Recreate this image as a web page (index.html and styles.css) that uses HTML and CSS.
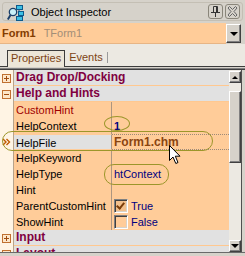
FILE: index.html
```html
<!DOCTYPE html>
<html>
<head>
    <title>Object Inspector</title>
    <link rel="stylesheet" href="styles.css">
</head>
<body>
    <div class="inspector">
        <div class="titlebar">
            <div class="caption">
                <svg class="app-icon" width="17" height="17" viewBox="0 0 17 17">
                    <path d="M12 3 V14 M12 9 H14" stroke="#1b4f80" stroke-width="1" fill="none"/>
                    <rect x="9.5" y="1.5" width="6" height="4" fill="#3cc0e4" stroke="#0d5b8c"/>
                    <rect x="11.5" y="7.5" width="5" height="4" fill="#3cc0e4" stroke="#0d5b8c"/>
                    <rect x="9.5" y="12.5" width="6" height="4" fill="#3cc0e4" stroke="#0d5b8c"/>
                    <line x1="3.5" y1="11" x2="0.8" y2="15.5" stroke="#1b3f6a" stroke-width="2"/>
                    <circle cx="6" cy="8" r="3.7" fill="#c8f0f8" stroke="#1b3f6a" stroke-width="1.3"/>
                </svg>
                <span class="title">Object Inspector</span>
                <span class="tool-btn">
                    <svg width="13" height="13" viewBox="0 0 13 13">
                        <path d="M4.5 1.5 H8.5 V7.5 H4.5 Z" fill="none" stroke="#333"/>
                        <path d="M7.5 2 V7" stroke="#333"/>
                        <path d="M2 7.5 H11 M6.5 8 V12" stroke="#333"/>
                    </svg>
                </span>
                <span class="tool-btn">
                    <svg width="13" height="13" viewBox="0 0 13 13">
                        <polygon points="2,3 3.5,1.5 6.5,4.5 9.5,1.5 11,3 8,6.5 11,10 9.5,11.5 6.5,8.5 3.5,11.5 2,10 5,6.5" fill="none" stroke="#666"/>
                    </svg>
                </span>
            </div>
        </div>

        <div class="combo">
            <div class="combo-field">
                <span class="obj-name">Form1</span>
                <span class="obj-type">TForm1</span>
            </div>
            <span class="drop-btn"><i class="tri-down"></i></span>
        </div>

        <div class="tabs">
            <span class="tab active">Properties</span>
            <span class="tab">Events</span>
            <span class="tab-sep"></span>
        </div>

        <div class="grid-wrap">
            <div class="grid">
                <div class="row cat">
                    <span class="gut"><i class="box plus"></i></span>
                    <span class="cat-name">Drag Drop/Docking</span>
                </div>
                <div class="row cat">
                    <span class="gut"><i class="box"></i></span>
                    <span class="cat-name">Help and Hints</span>
                </div>
                <div class="row">
                    <span class="gut"></span>
                    <span class="name sub">CustomHint</span>
                    <span class="val"></span>
                </div>
                <div class="row">
                    <span class="gut"></span>
                    <span class="name">HelpContext</span>
                    <span class="val num">1</span>
                </div>
                <div class="row selected">
                    <span class="gut">
                        <svg width="9" height="8" viewBox="0 0 9 8">
                            <path d="M1 1 L4 4 L1 7 M4.5 1 L7.5 4 L4.5 7" fill="none" stroke="#c05a00" stroke-width="1.4"/>
                        </svg>
                    </span>
                    <span class="name">HelpFile</span>
                    <span class="val changed">Form1.chm</span>
                </div>
                <div class="row">
                    <span class="gut"></span>
                    <span class="name">HelpKeyword</span>
                    <span class="val"></span>
                </div>
                <div class="row">
                    <span class="gut"></span>
                    <span class="name">HelpType</span>
                    <span class="val enum">htContext</span>
                </div>
                <div class="row">
                    <span class="gut"></span>
                    <span class="name">Hint</span>
                    <span class="val"></span>
                </div>
                <div class="row">
                    <span class="gut"></span>
                    <span class="name">ParentCustomHint</span>
                    <span class="val enum"><i class="check on"></i>True</span>
                </div>
                <div class="row">
                    <span class="gut"></span>
                    <span class="name">ShowHint</span>
                    <span class="val enum"><i class="check"></i>False</span>
                </div>
                <div class="row cat">
                    <span class="gut"><i class="box plus"></i></span>
                    <span class="cat-name">Input</span>
                </div>
                <div class="row cat">
                    <span class="gut"><i class="box plus"></i></span>
                    <span class="cat-name">Layout</span>
                </div>
            </div>
            <div class="scrollbar">
                <span class="sb-btn"><i class="tri-up"></i></span>
                <span class="sb-thumb"></span>
                <span class="sb-btn"><i class="tri-down"></i></span>
            </div>
            <div class="edge"></div>
        </div>
        <div class="bottom-frame"></div>

        <!-- annotations drawn over the grid -->
        <span class="mark mark-context"></span>
        <span class="mark mark-file"></span>
        <span class="mark mark-type"></span>
        <svg class="cursor" width="13" height="20" viewBox="0 0 13 20">
            <path d="M0.5 0.5 L0.5 15.5 L4 12 L6.8 18.5 L9 17.5 L6.3 11.2 L11 11.2 Z" fill="#fff" stroke="#000"/>
        </svg>
    </div>
</body>
</html>
```

FILE: styles.css
```css
* {
    box-sizing: border-box;
}

body {
    margin: 0;
    font-family: "Liberation Sans", Arial, sans-serif;
    font-size: 11px;
    background-color: #d6d2ca;
}

.inspector {
    position: relative;
    width: 245px;
    height: 256px;
    overflow: hidden;
    background-color: #d6d2ca;
}

/* title bar */
.titlebar {
    height: 22px;
    padding: 2px 2px 1px 2px;
}

.caption {
    display: flex;
    align-items: center;
    height: 19px;
    border: 1px solid #c4bfb4;
    border-radius: 3px;
    padding-left: 4px;
}

.app-icon {
    margin-top: 1px;
}

.title {
    flex: 1;
    margin-left: 7px;
    font-size: 11px;
    color: #000;
}

.tool-btn {
    display: flex;
    align-items: center;
    justify-content: center;
    width: 15px;
    height: 15px;
    margin-right: 2px;
    border: 1px solid #8a867a;
    border-radius: 3px;
}

/* object selector */
.combo {
    display: flex;
    height: 22px;
    padding-top: 1px;
    padding-right: 4px;
}

.combo-field {
    flex: 1;
    display: flex;
    align-items: center;
    background-color: #ffcc99;
    border-bottom: 1px solid #e7b585;
    padding-left: 2px;
}

.obj-name {
    font-weight: bold;
    color: #843c00;
}

.obj-type {
    margin-left: 8px;
    color: #a28e78;
}

.drop-btn {
    display: flex;
    align-items: center;
    justify-content: center;
    width: 15px;
    height: 19px;
    margin-top: 1px;
    background-color: #d6d2ca;
    border: 1px solid;
    border-color: #fff #404040 #404040 #fff;
    box-shadow: inset -1px -1px #808080;
}

.tri-down {
    width: 0;
    height: 0;
    border-left: 4px solid transparent;
    border-right: 4px solid transparent;
    border-top: 4px solid #000;
}

.tri-up {
    width: 0;
    height: 0;
    border-left: 3px solid transparent;
    border-right: 3px solid transparent;
    border-bottom: 3px solid #000;
}

/* tabs */
.tabs {
    display: flex;
    align-items: flex-end;
    height: 23px;
    background-color: #ece9e2;
    border-bottom: 1px solid #3c3c3c;
    padding-left: 7px;
}

.tab {
    height: 16px;
    line-height: 15px;
    padding: 0 4px;
    color: #7c4414;
}

.tab.active {
    height: 17px;
    margin-bottom: -1px;
    padding: 0 3px;
    background-color: #ece6d8;
    border: 1px solid #3c3c3c;
    border-bottom: none;
}

.tab-sep {
    width: 1px;
    height: 11px;
    margin-bottom: 3px;
    background-color: #9a9a9a;
}

/* property grid */
.grid-wrap {
    display: flex;
    height: 184px;
    margin-top: 1px;
    border-top: 1px solid #808080;
    box-shadow: inset 0 1px #404040;
    padding-top: 1px;
}

.grid {
    width: 229px;
    overflow: hidden;
    background-color: #fff4e4;
}

.row {
    display: flex;
    height: 16px;
    line-height: 16px;
}

.gut {
    flex: none;
    display: flex;
    align-items: center;
    justify-content: center;
    width: 14px;
    border-right: 1px solid #b8a38a;
    background-color: #fff4e4;
}

.name {
    width: 98px;
    padding-left: 2px;
    border-right: 1px solid #ad9680;
    background-color: #ffcc99;
    color: #000;
    white-space: nowrap;
}

.name.sub {
    color: #a00000;
}

.val {
    flex: 1;
    display: flex;
    align-items: center;
    padding-left: 2px;
    background-color: #ffcc99;
    color: #000080;
}

.val.num {
    font-weight: bold;
}

.val.changed {
    font-weight: bold;
    font-size: 12px;
    color: #8a4410;
}

.selected .name {
    background-color: #e1e1e1;
    border-top: 1px solid #ffcc99;
    border-bottom: 1px solid #ffcc99;
}

.selected .val {
    border-top: 1px dotted #9d8a78;
    border-bottom: 1px dotted #9d8a78;
}

.cat .cat-name {
    flex: 1;
    padding-left: 2px;
    line-height: 15px;
    background-color: #e1e1e1;
    border-bottom: 1px solid #ffc890;
    font-size: 12px;
    font-weight: bold;
    color: #800040;
}

.box {
    position: relative;
    width: 9px;
    height: 9px;
    border: 1px solid #c07030;
    background-color: #fde6c8;
}

.box::before {
    content: "";
    position: absolute;
    left: 1px;
    top: 3px;
    width: 5px;
    height: 1px;
    background-color: #a04c10;
}

.box.plus::after {
    content: "";
    position: absolute;
    left: 3px;
    top: 1px;
    width: 1px;
    height: 5px;
    background-color: #a04c10;
}

.check {
    position: relative;
    width: 14px;
    height: 14px;
    margin-right: 3px;
    border: 1px solid;
    border-color: #808080 #fff #fff #808080;
    box-shadow: inset 1px 1px #404040, inset -1px -1px #d6d2ca;
}

.check.on {
    background-color: #f2c08c;
}

.check.on::after {
    content: "";
    position: absolute;
    left: 3px;
    top: 1px;
    width: 3px;
    height: 6px;
    border-right: 2px solid #7a3c08;
    border-bottom: 2px solid #7a3c08;
    transform: rotate(40deg);
}

/* scrollbar */
.scrollbar {
    display: flex;
    flex-direction: column;
    width: 12px;
    background-color: #ece9e2;
    padding-top: 1px;
}

.sb-btn {
    display: flex;
    align-items: center;
    justify-content: center;
    height: 12px;
    background-color: #d6d2ca;
    border: 1px solid;
    border-color: #fff #404040 #404040 #fff;
    box-shadow: inset -1px -1px #808080;
}

.sb-thumb {
    height: 72px;
    margin-top: 8px;
    margin-bottom: auto;
    background-color: #d6d2ca;
    border: 1px solid;
    border-color: #fff #404040 #404040 #fff;
    box-shadow: inset -1px -1px #808080;
}

.edge {
    width: 4px;
    border-left: 1px solid #505050;
}

.bottom-frame {
    height: 3px;
    border-top: 1px solid #6a6a6a;
}

/* yellow annotation rings */
.mark {
    position: absolute;
    border: 1px solid #9c962a;
}

.mark-context {
    left: 104px;
    top: 116px;
    width: 26px;
    height: 15px;
    border-radius: 50%;
}

.mark-file {
    left: 2px;
    top: 131px;
    width: 211px;
    height: 20px;
    border-radius: 10px;
}

.mark-type {
    left: 104px;
    top: 164px;
    width: 65px;
    height: 21px;
    border-radius: 10px;
}

.cursor {
    position: absolute;
    left: 169px;
    top: 145px;
}
```
